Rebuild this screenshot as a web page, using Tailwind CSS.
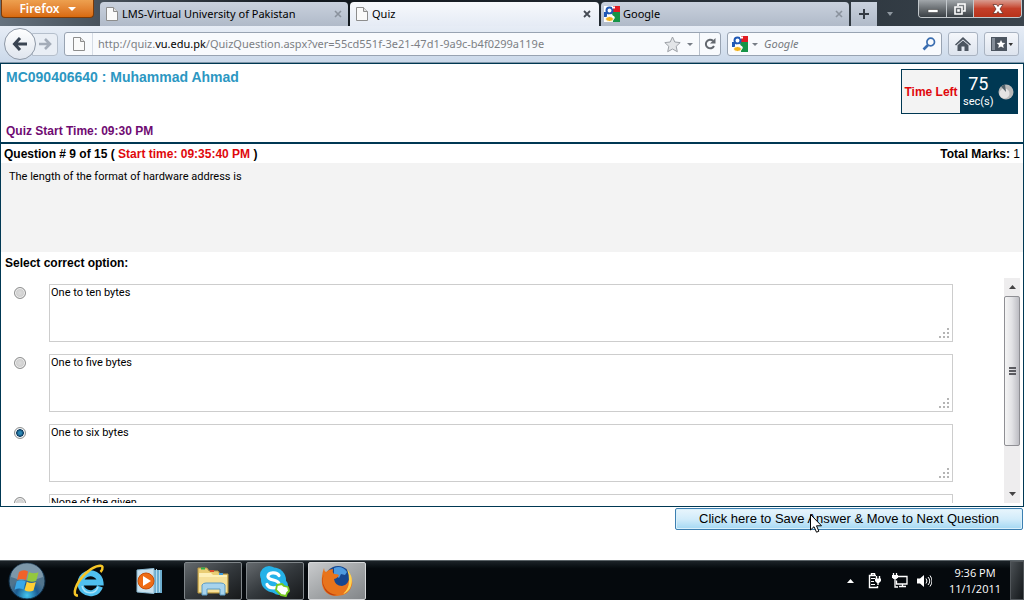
<!DOCTYPE html>
<html lang="en">
	<head>
		<meta charset="UTF-8" />
		<meta name="viewport" content="width=device-width, initial-scale=1.0" />
		<title>Quiz</title>
		<script src="https://cdn.jsdelivr.net/npm/@tailwindcss/browser@4"></script>
	</head>
	<body class="flex min-h-screen flex-col bg-white font-['Liberation_Sans',Arial,sans-serif] text-xs text-black">
		<!-- browser window -->
		<header class="font-['Noto_Sans','Open_Sans',sans-serif]">
			<div class="flex h-[26px] items-start bg-linear-to-r from-[#66727e] via-[#10161c] via-30% to-[#3a444d]">
				<button class="ml-px flex h-[18px] w-[93px] shrink-0 items-center justify-center gap-2 rounded-b border border-t-0 border-[#7b3a08] bg-linear-to-b from-[#eda04f] to-[#d96a0c] text-xs font-semibold text-white">
					Firefox
					<svg class="h-1 w-2" viewBox="0 0 8 4" fill="white"><path d="M0 0h8L4 4z" /></svg>
				</button>
				<nav class="ml-[6px] mt-[2px] flex h-6 min-w-0 flex-1 gap-[2px]" aria-label="Tabs">
					<div class="flex w-[248px] items-center gap-1 rounded-t-sm bg-linear-to-b from-[#c9d1dd] to-[#b0bac9] pl-[6px] pr-[6px]">
						<svg class="h-4 w-3 shrink-0" viewBox="0 0 12 16" fill="#fafafa" stroke="#8d8d8d"><path d="M.5 1.5h7l4 4v9H.5z" /><path d="M7.500 1.500v4h4" fill="#e2e2e2" /></svg>
						<a href="#" class="flex-1 truncate text-[11px]">LMS-Virtual University of Pakistan</a>
						<button aria-label="Close tab"><svg class="size-2" viewBox="0 0 8 8" stroke="#8a929d" stroke-width="1.600"><path d="M1 1l6 6M7 1L1 7" /></svg></button>
					</div>
					<div class="flex w-[249px] items-center gap-1 rounded-t-sm bg-linear-to-b from-[#f7f9fc] to-[#e5ebf5] pl-[6px] pr-[8px]">
						<svg class="h-4 w-3 shrink-0" viewBox="0 0 12 16" fill="#fafafa" stroke="#8d8d8d"><path d="M.5 1.5h7l4 4v9H.5z" /><path d="M7.500 1.500v4h4" fill="#e2e2e2" /></svg>
						<a href="#" class="flex-1 truncate text-[11px]">Quiz</a>
						<button aria-label="Close tab"><svg class="size-2" viewBox="0 0 8 8" stroke="#454b54" stroke-width="1.800"><path d="M1 1l6 6M7 1L1 7" /></svg></button>
					</div>
					<div class="flex w-[248px] items-center gap-[3px] rounded-t-sm bg-linear-to-b from-[#c9d1dd] to-[#b0bac9] pl-[3px] pr-[6px]">
						<svg class="size-4 shrink-0" viewBox="0 0 16 16"><path fill="#fff" d="M0 0h16v16H0z" /><path fill="#e11b22" d="M9 0h7v6H9z" /><path fill="#159447" d="M8 6h8v10H9z" /><path fill="#1f58b5" d="M0 6h3v5H0z" /><circle cx="5.500" cy="4.500" r="3" fill="#fff" stroke="#1f58b5" stroke-width="2" /><path d="M8 1.500h3M6 8.500c0 1.500 4 1.500 4 4" fill="none" stroke="#fff" stroke-width="2.200" /><ellipse cx="5.500" cy="13" rx="4" ry="2.500" fill="#f2b21b" stroke="#fff" /></svg>
						<a href="#" class="flex-1 truncate text-[11px]">Google</a>
						<button aria-label="Close tab"><svg class="size-2" viewBox="0 0 8 8" stroke="#8a929d" stroke-width="1.600"><path d="M1 1l6 6M7 1L1 7" /></svg></button>
					</div>
					<button class="flex w-[26px] items-center justify-center bg-linear-to-b from-[#c9d1dd] to-[#b0bac9]" aria-label="New tab">
						<svg class="size-[10px]" viewBox="0 0 10 10" stroke="#333a43" stroke-width="2"><path d="M5 0v10M0 5h10" /></svg>
					</button>
					<button class="ml-2 self-center" aria-label="List all tabs">
						<svg class="h-1 w-[6px]" viewBox="0 0 6 4" fill="#8e979f"><path d="M0 0h6L3 4z" /></svg>
					</button>
				</nav>
				<div class="mr-[2px] flex h-[18px] overflow-hidden rounded-b border border-t-0 border-[#c3c8cc]">
					<button class="flex w-[28px] items-center justify-center border-r border-[#c3c8cc] bg-linear-to-b from-[#a2a7ab] via-[#6b7074] to-[#3a4045]" aria-label="Minimize">
						<svg class="h-[10px] w-3" viewBox="0 0 12 10"><path fill="#fff" stroke="#444" stroke-width=".6" d="M1 5.500h10v3H1z" /></svg>
					</button>
					<button class="flex w-[27px] items-center justify-center border-r border-[#c3c8cc] bg-linear-to-b from-[#a2a7ab] via-[#6b7074] to-[#3a4045]" aria-label="Restore">
						<svg class="size-3" viewBox="0 0 12 12" fill="none" stroke="#fff" stroke-width="1.600"><path d="M4 3V1h7v7H9" /><path d="M1 4h7v7H1zM4 7h1v1H4z" /></svg>
					</button>
					<button class="flex w-[47px] items-center justify-center bg-linear-to-b from-[#d89c90] via-[#c4402a] to-[#b8321a]" aria-label="Close">
						<svg class="h-[10px] w-3" viewBox="0 0 12 10"><path fill="#fff" stroke="#5b2a22" stroke-width=".7" d="M1 .5h3.500L6 2.500 7.500.5H11L8 5l3 4.500H7.500L6 7.500l-1.500 2H1L4 5z" /></svg>
					</button>
				</div>
			</div>
			<!-- navigation bar -->
			<div class="flex h-[37px] items-center border-b border-[#8096a8] bg-linear-to-b from-[#e7edf6] to-[#cbd9ea] pl-1 pr-[5px]">
				<button class="z-10 flex size-8 shrink-0 items-center justify-center rounded-full border border-[#8e98a6] bg-linear-to-b from-white to-[#dfe5ee]" aria-label="Back">
					<svg class="h-[14px] w-4" viewBox="0 0 16 14" fill="none" stroke="#3a4452" stroke-width="3"><path d="M8 1L2.500 7 8 13M3 7h12" /></svg>
				</button>
				<button class="-ml-1 flex h-[23px] w-[26px] shrink-0 items-center justify-center rounded-r border border-[#b5bfcc] bg-[#e9eef5]" aria-label="Forward">
					<svg class="h-3 w-[13px]" viewBox="0 0 13 12" fill="none" stroke="#a4acb8" stroke-width="2.600"><path d="M6 1l5 5-5 5M0 6h10" /></svg>
				</button>
				<div class="ml-[6px] flex h-6 min-w-0 flex-1 items-center rounded-[3px] border border-[#98a3b2] bg-[#f8fafd]">
					<span class="flex h-full w-7 shrink-0 items-center justify-center border-r border-[#d6dce5]">
						<svg class="h-4 w-3" viewBox="0 0 12 16" fill="#fafafa" stroke="#8d8d8d"><path d="M.5 1.500h7l4 4v9H.5z" /><path d="M7.500 1.500v4h4" fill="#e2e2e2" /></svg>
					</span>
					<p class="min-w-0 flex-1 truncate pl-[5px] text-[11px]/5 text-[#7c7f84]">http://quiz.<span class="text-black">vu.edu.pk</span>/QuizQuestion.aspx?ver=55cd551f-3e21-47d1-9a9c-b4f0299a119e</p>
					<button aria-label="Bookmark this page"><svg class="size-[17px]" viewBox="0 0 17 17" fill="#e3e5e8" stroke="#9da1a7"><path d="M8.500 1l2.300 5 5.400.6-4 3.700 1.100 5.400-4.800-2.700-4.800 2.700 1.100-5.400-4-3.700L6.200 6z" /></svg></button>
					<button class="mx-[6px]" aria-label="History"><svg class="h-[3px] w-[6px]" viewBox="0 0 6 3" fill="#777d86"><path d="M0 0h6L3 3z" /></svg></button>
					<button class="flex h-full w-[21px] items-center justify-center border-l border-[#b8c0cb]" aria-label="Reload">
						<svg class="size-3" viewBox="0 0 12 12" fill="none" stroke="#62676e" stroke-width="2"><path d="M9 2.800A4.300 4.300 0 1 0 10 8" /><path d="M11.500 0v5.500H6z" fill="#62676e" stroke="none" /></svg>
					</button>
				</div>
				<form class="ml-[6px] flex h-6 w-[215px] items-center rounded-[3px] border border-[#98a3b2] bg-[#f8fafd] pl-1 pr-[5px]">
					<svg class="size-4 shrink-0" viewBox="0 0 16 16"><path fill="#fff" d="M0 0h16v16H0z" /><path fill="#e11b22" d="M9 0h7v6H9z" /><path fill="#159447" d="M8 6h8v10H9z" /><path fill="#1f58b5" d="M0 6h3v5H0z" /><circle cx="5.500" cy="4.500" r="3" fill="#fff" stroke="#1f58b5" stroke-width="2" /><path d="M8 1.500h3M6 8.500c0 1.500 4 1.500 4 4" fill="none" stroke="#fff" stroke-width="2.200" /><ellipse cx="5.500" cy="13" rx="4" ry="2.500" fill="#f2b21b" stroke="#fff" /></svg>
					<svg class="ml-[4px] h-[3px] w-[6px] shrink-0" viewBox="0 0 6 3" fill="#777d86"><path d="M0 0h6L3 3z" /></svg>
					<input class="ml-[6px] min-w-0 flex-1 text-[11px] italic placeholder:text-[#777a80]" type="text" placeholder="Google" aria-label="Search" />
					<button class="shrink-0" aria-label="Search"><svg class="size-[14px]" viewBox="0 0 14 14" fill="none" stroke="#3a6db0"><circle cx="8.700" cy="5" r="3.800" stroke-width="1.700" /><path d="M6 8l-4.500 4.500" stroke-width="2.600" /></svg></button>
				</form>
				<button class="ml-[6px] flex h-6 w-[30px] shrink-0 items-center justify-center rounded-[3px] border border-[#a9b3c1] bg-linear-to-b from-[#f5f7fb] to-[#dde4ee]" aria-label="Home">
					<svg class="h-[14px] w-4" viewBox="0 0 16 14" fill="#4c5560"><path d="M8 0l8 7.500-1 1L8 2.500 1 8.500l-1-1z" /><path d="M8 3.500l5.500 4.800V14H9.500V9.500h-3V14H2.500V8.300z" /></svg>
				</button>
				<button class="ml-[6px] flex h-6 w-[35px] shrink-0 items-center justify-center rounded-[3px] border border-[#a9b3c1] bg-linear-to-b from-[#f5f7fb] to-[#dde4ee]" aria-label="Bookmarks">
					<svg class="h-[14px] w-[22px]" viewBox="0 0 22 14"><path fill="#4c5560" d="M0 0h16v14H0z" /><path fill="#858e99" d="M1 1h3v12H1z" /><path fill="#fff" d="M10 3l1.300 2.700 3 .4-2.200 2 .6 3-2.700-1.500-2.700 1.500.6-3-2.200-2 3-.4z" /><path fill="#333" d="M17.500 6H22l-2.200 3z" /></svg>
				</button>
			</div>
		</header>

		<main class="flex flex-1 flex-col">
			<section class="border border-[#003853]">
				<div class="flex h-[80px] justify-between border-b-2 border-[#003853] pl-[5px] pr-[5px]">
					<div class="flex flex-col justify-between pb-[3px] pt-[3px]">
						<h1 class="text-sm/5 font-bold text-[#2c97c2]">MC090406640 : Muhammad Ahmad</h1>
						<p class="text-xs/4 font-bold text-[#6f0b72]">Quiz Start Time: 09:30 PM</p>
					</div>
					<div class="mt-[5px] flex h-[45px] w-[117px] border border-[#003853]">
						<p class="flex flex-1 items-center justify-center whitespace-nowrap bg-[#f3f3f3] text-xs font-bold text-[#e0080c]">Time Left</p>
						<div class="flex w-[57px] items-center justify-between bg-[#003853] px-[3px] text-white">
							<p class="flex flex-col items-center font-[Roboto,sans-serif] text-[11px]/4"><span class="text-lg/5">75</span>sec(s)</p>
							<svg class="size-4" viewBox="0 0 16 16"><circle cx="8" cy="8" r="7.500" fill="#b9b9b9" /><circle cx="6.500" cy="9.500" r="5" fill="#e4e4e4" /><path fill="#53626b" d="M8 8L7 .5A7.500 7.500 0 0 0 3 2.500z" /></svg>
						</div>
					</div>
				</div>
				<div class="flex h-[19px] items-center justify-between pl-[3px] pr-[3px] font-bold">
					<p>Question # 9 of 15 ( <span class="text-[#e0080c]">Start time: 09:35:40 PM</span> )</p>
					<p>Total Marks: <span class="font-normal">1</span></p>
				</div>
				<p class="h-[89px] bg-[#f3f3f3] pl-2 pt-[6px] font-[Roboto,sans-serif] text-[11px]/4">The length of the format of hardware address is</p>
				<h2 class="pl-1 pt-[3px] text-xs/4 font-bold">Select correct option:</h2>
				<!-- answers -->
				<div class="mb-[3px] mt-[7px] flex h-[225px] overflow-hidden pr-[3px]">
					<form class="flex flex-1 flex-col gap-3 pl-[13px] pr-[51px] pt-[6px] font-[Roboto,sans-serif]">
						<div class="flex shrink-0 items-start">
							<input class="mt-[3px] size-3 shrink-0 appearance-none rounded-full border border-[#8e8f8f] bg-radial from-[#dcdcdc] to-[#c4c4c4] shadow-[inset_0_0_0_1px_#f4f4f4] checked:from-[#2b87b5] checked:from-20% checked:via-[#0c3c61] checked:via-50% checked:to-[#dfe8ee] checked:to-60%" type="radio" name="answer" id="a1" aria-labelledby="t1" />
							<div class="relative ml-[23px] flex-1">
								<textarea class="block h-[58px] w-full resize-none border border-[#cdcdcd] px-px text-[11px]/4" id="t1" aria-label="Option 1" readonly>One to ten bytes</textarea>
								<svg class="absolute bottom-1 right-1 size-[10px]" viewBox="0 0 10 10" fill="#b5b5b5"><path d="M8 0h2v2H8zM4 4h2v2H4zM8 4h2v2H8zM0 8h2v2H0zM4 8h2v2H4zM8 8h2v2H8z" /></svg>
							</div>
						</div>
						<div class="flex shrink-0 items-start">
							<input class="mt-[3px] size-3 shrink-0 appearance-none rounded-full border border-[#8e8f8f] bg-radial from-[#dcdcdc] to-[#c4c4c4] shadow-[inset_0_0_0_1px_#f4f4f4] checked:from-[#2b87b5] checked:from-20% checked:via-[#0c3c61] checked:via-50% checked:to-[#dfe8ee] checked:to-60%" type="radio" name="answer" id="a2" aria-labelledby="t2" />
							<div class="relative ml-[23px] flex-1">
								<textarea class="block h-[58px] w-full resize-none border border-[#cdcdcd] px-px text-[11px]/4" id="t2" aria-label="Option 2" readonly>One to five bytes</textarea>
								<svg class="absolute bottom-1 right-1 size-[10px]" viewBox="0 0 10 10" fill="#b5b5b5"><path d="M8 0h2v2H8zM4 4h2v2H4zM8 4h2v2H8zM0 8h2v2H0zM4 8h2v2H4zM8 8h2v2H8z" /></svg>
							</div>
						</div>
						<div class="flex shrink-0 items-start">
							<input class="mt-[3px] size-3 shrink-0 appearance-none rounded-full border border-[#8e8f8f] bg-radial from-[#dcdcdc] to-[#c4c4c4] shadow-[inset_0_0_0_1px_#f4f4f4] checked:from-[#2b87b5] checked:from-20% checked:via-[#0c3c61] checked:via-50% checked:to-[#dfe8ee] checked:to-60%" type="radio" name="answer" id="a3" aria-labelledby="t3" checked />
							<div class="relative ml-[23px] flex-1">
								<textarea class="block h-[58px] w-full resize-none border border-[#cdcdcd] px-px text-[11px]/4" id="t3" aria-label="Option 3" readonly>One to six bytes</textarea>
								<svg class="absolute bottom-1 right-1 size-[10px]" viewBox="0 0 10 10" fill="#b5b5b5"><path d="M8 0h2v2H8zM4 4h2v2H4zM8 4h2v2H8zM0 8h2v2H0zM4 8h2v2H4zM8 8h2v2H8z" /></svg>
							</div>
						</div>
						<div class="flex shrink-0 items-start">
							<input class="mt-[3px] size-3 shrink-0 appearance-none rounded-full border border-[#8e8f8f] bg-radial from-[#dcdcdc] to-[#c4c4c4] shadow-[inset_0_0_0_1px_#f4f4f4] checked:from-[#2b87b5] checked:from-20% checked:via-[#0c3c61] checked:via-50% checked:to-[#dfe8ee] checked:to-60%" type="radio" name="answer" id="a4" aria-labelledby="t4" />
							<div class="relative ml-[23px] flex-1">
								<textarea class="block h-[58px] w-full resize-none border border-[#cdcdcd] px-px text-[11px]/4" id="t4" aria-label="Option 4" readonly>None of the given</textarea>
							</div>
						</div>
					</form>
					<!-- scrollbar -->
					<div class="flex w-4 flex-col items-center bg-[#eeedee]">
						<svg class="my-[7px] h-1 w-[7px]" viewBox="0 0 7 4" fill="#444"><path d="M0 4h7L3.500 0z" /></svg>
						<div class="flex h-[150px] w-full items-center justify-center rounded-xs border border-[#8f8f94] bg-linear-to-r from-[#f5f5f5] via-[#e2e2e5] to-[#bdbdc3]">
							<svg class="h-2 w-[7px]" viewBox="0 0 7 8" fill="#5b5b60"><path d="M0 0h7v2H0zM0 3h7v2H0zM0 6h7v2H0z" /></svg>
						</div>
						<svg class="mb-[7px] mt-auto h-1 w-[7px]" viewBox="0 0 7 4" fill="#444"><path d="M0 0h7L3.500 4z" /></svg>
					</div>
				</div>
			</section>
			<div class="relative mt-px self-end pr-px">
				<button class="h-[22px] w-[348px] rounded-xs border border-[#3c7fb1] bg-linear-to-b from-[#e8f5fc] via-[#d2ecfa] to-[#a3d8f3] text-[13px]/5 whitespace-nowrap shadow-[inset_0_0_0_1px_#d9f0fb]">Click here to Save Answer &amp; Move to Next Question</button>
				<svg class="absolute left-[135px] top-[6px] h-[19px] w-3" viewBox="0 0 12 19"><path fill="#fff" stroke="#000" d="M.5.5v15.500l3.500-3.300 2.500 5.500 2.400-1-2.400-5.400h5z" /></svg>
			</div>
		</main>

		<!-- taskbar -->
		<footer class="flex h-10 items-center border-t border-[#5b6368] bg-linear-to-b from-[#1c2328] to-[#05090d] to-20% font-['Open_Sans','Noto_Sans',sans-serif] text-white">
			<button class="ml-[8px]" aria-label="Start">
				<svg class="size-[38px]" viewBox="0 0 38 38"><defs><radialGradient id="orb" cy="90%"><stop offset="0" stop-color="#44c7ef" /><stop offset=".6" stop-color="#1c5d93" /><stop offset="1" stop-color="#51748c" /></radialGradient></defs><circle cx="19" cy="19" r="18" fill="url(#orb)" stroke="#0d2c45" /><path d="M3 15a16 14 0 0 1 32 0q-16 7-32 0z" fill="#fff" opacity=".25" /><path fill="#f0622a" d="M11 10q4.500-3 9-.500l-2 8.500q-4.500-2-9 0z" /><path fill="#94c83d" d="M21 10q4.500 2.500 9.500.3l-2.300 8.400q-4.700 2-9.200-.2z" /><path fill="#39a8e8" d="M8.700 19.200q4.500-2 9 0L15.500 27.500q-4.500-2-9 .2z" /><path fill="#ffcf35" d="M18.800 19.700q4.500 2.300 9 .3L25.500 28.500q-4.500 2-9-.3z" /></svg>
			</button>
			<button class="ml-[27px]" aria-label="Internet Explorer">
				<svg class="h-[34px] w-8" viewBox="0 0 32 34"><path d="M27 22.500A10 10 0 1 1 27.500 18.500H9" fill="none" stroke="#4fc0f0" stroke-width="6" /><path d="M25 23A8.500 9.500 0 0 1 9 22" fill="none" stroke="#a9e4fb" stroke-width="1.500" /><path d="M5 31.500C-2 32 3 19 12 10 20 2 29 0 29.500 3c.3 2-1 4-2 5" fill="none" stroke="#f6c526" stroke-width="2.500" /></svg>
			</button>
			<button class="ml-[31px]" aria-label="Media Player">
				<svg class="h-[26px] w-[27px]" viewBox="0 0 27 26"><path fill="#6eaed0" d="M10 2h16v23H10z" /><path stroke="#b4dcef" d="M20.500 1v24M23.500 2v22" /><path fill="#c9e1ee" stroke="#8bb8d0" d="M1 2l17-1.500v25L1 24z" /><circle cx="10" cy="13" r="8" fill="#ee6c14" stroke="#c84e06" /><path fill="#fff" d="M7 8l8 5-8 5z" /></svg>
			</button>
			<button class="ml-[21px] flex h-[38px] w-[58px] items-center justify-center rounded-xs border border-[#80868a] bg-linear-to-br from-[#656a6e] via-[#33383c] to-[#17191b]" aria-label="Windows Explorer">
				<svg class="h-[30px] w-[34px]" viewBox="0 0 34 30"><path fill="#e9cd74" stroke="#b89745" d="M2 2h9l2 3h9l2 3h8v19H2z" /><path fill="#fdf0b8" d="M3 7h12l2 2h14v17H3z" /><path fill="#2fae4c" d="M5 1.500h4v2H5z" /><path fill="#d84b2c" d="M14 4h4v2h-4z" /><path fill="#3d9be0" d="M23 7h4v2h-4z" /><path fill="#f5e09a" d="M3 11h28v15H3z" /><path fill="#a7d3ec" stroke="#5c9cc5" d="M6 29V19q1-2 4-2h15q3 0 4 2v10h-5v-6H11v6z" /></svg>
			</button>
			<button class="ml-1 flex h-[38px] w-[58px] items-center justify-center rounded-xs border border-[#80868a] bg-linear-to-br from-[#656a6e] via-[#33383c] to-[#17191b]" aria-label="Skype">
				<svg class="size-8" viewBox="0 0 32 32"><g fill="#25b2e8"><circle cx="10" cy="10" r="9" /><circle cx="14.500" cy="15" r="12.500" /><circle cx="20" cy="21" r="9" /></g><path d="M20 10.500c-2-4-11-3.500-11 1s11 2.500 11 7.500-10 5-12 .500" fill="none" stroke="#fff" stroke-width="3.200" stroke-linecap="round" /><path d="M18 20l5-1 2 2 4 1 1 4-2 2-1 3-5-1-2-2-3-3z" fill="#fff" stroke="#77c91f" stroke-width="1.800" stroke-linejoin="round" /></svg>
			</button>
			<button class="ml-1 flex h-[38px] w-[58px] items-center justify-center rounded-xs border border-[#d5d7d9] bg-linear-to-br from-[#c9cbcd] via-[#a3a6a8] to-[#828588]" aria-label="Firefox">
				<svg class="size-8" viewBox="0 0 32 32"><circle cx="17" cy="14" r="13" fill="#17478f" /><path fill="#4e9be0" d="M13 3q8-3 13 4l-2 3-4-1-2 4-5-4z" /><path fill="#e8741c" d="M3 3q0 3 2 4 3-3 7-3-1 3 1 5 4 0 5 1-1 3-5 4 1 7 8 7 7-1 8-11 3 5 2 10-3 11-15 11Q3 31 1 19 0 11 3 3z" /><path fill="#c0400e" d="M3 9q-3 8 1 14 4 6 12 7-7 2-12-5-5-8-1-16z" /><path fill="#ffd352" d="M26 4q7 8 4 17-2 6-8 8 6-5 6-13 0-7-2-12z" /></svg>
			</button>
			<div class="ml-auto flex items-center">
				<svg class="h-1 w-[7px]" viewBox="0 0 7 4" fill="#fff"><path d="M0 4h7L3.500 0z" /></svg>
				<svg class="ml-[14px] h-4 w-[14px]" viewBox="0 0 14 16" fill="none" stroke="#fff"><path d="M8 2.500H1.500v12h8V13M3.500 2V.5h3V2" stroke-width="1.400" /><path d="M3 5h4v1H3zM3 8h3v1H3zM3 11h4v1H3z" fill="#fff" stroke="none" /><path d="M8.500 3v3M11.500 3v3M10 9v3" stroke-width="1.400" /><path d="M7 5.500h6v2.500L11 10H9L7 8z" fill="#fff" stroke="none" /></svg>
				<svg class="ml-[10px] h-[15px] w-4" viewBox="0 0 16 15" fill="none" stroke="#fff" stroke-width="1.300"><path d="M6 3.500h9v7.500H4.500V7.500M7 13.500h7M10.500 11v2.500" /><path d="M1.500 0v3M4.500 0v3M3 5v9h3" /><path d="M0 2h6v2.500L4.500 6h-3L0 4.500z" fill="#fff" stroke="none" /></svg>
				<svg class="ml-[9px] h-[14px] w-[15px]" viewBox="0 0 15 14" fill="none" stroke="#fff"><path d="M0 4.500h3L7 1v12L3 9.500H0z" fill="#fff" stroke="none" /><path d="M9 4.500q2 2.500 0 5M11 3q3.500 4 0 8M13 1.500q4 5.500 0 11" /></svg>
				<p class="ml-4 w-[54px] whitespace-nowrap text-center text-[11px]/4">9:36 PM<br />11/1/2011</p>
				<button class="ml-2 h-[39px] w-[14px] border border-[#52575b] bg-linear-to-br from-[#4b5054] to-[#14181b]" aria-label="Show desktop"></button>
			</div>
		</footer>
	</body>
</html>
